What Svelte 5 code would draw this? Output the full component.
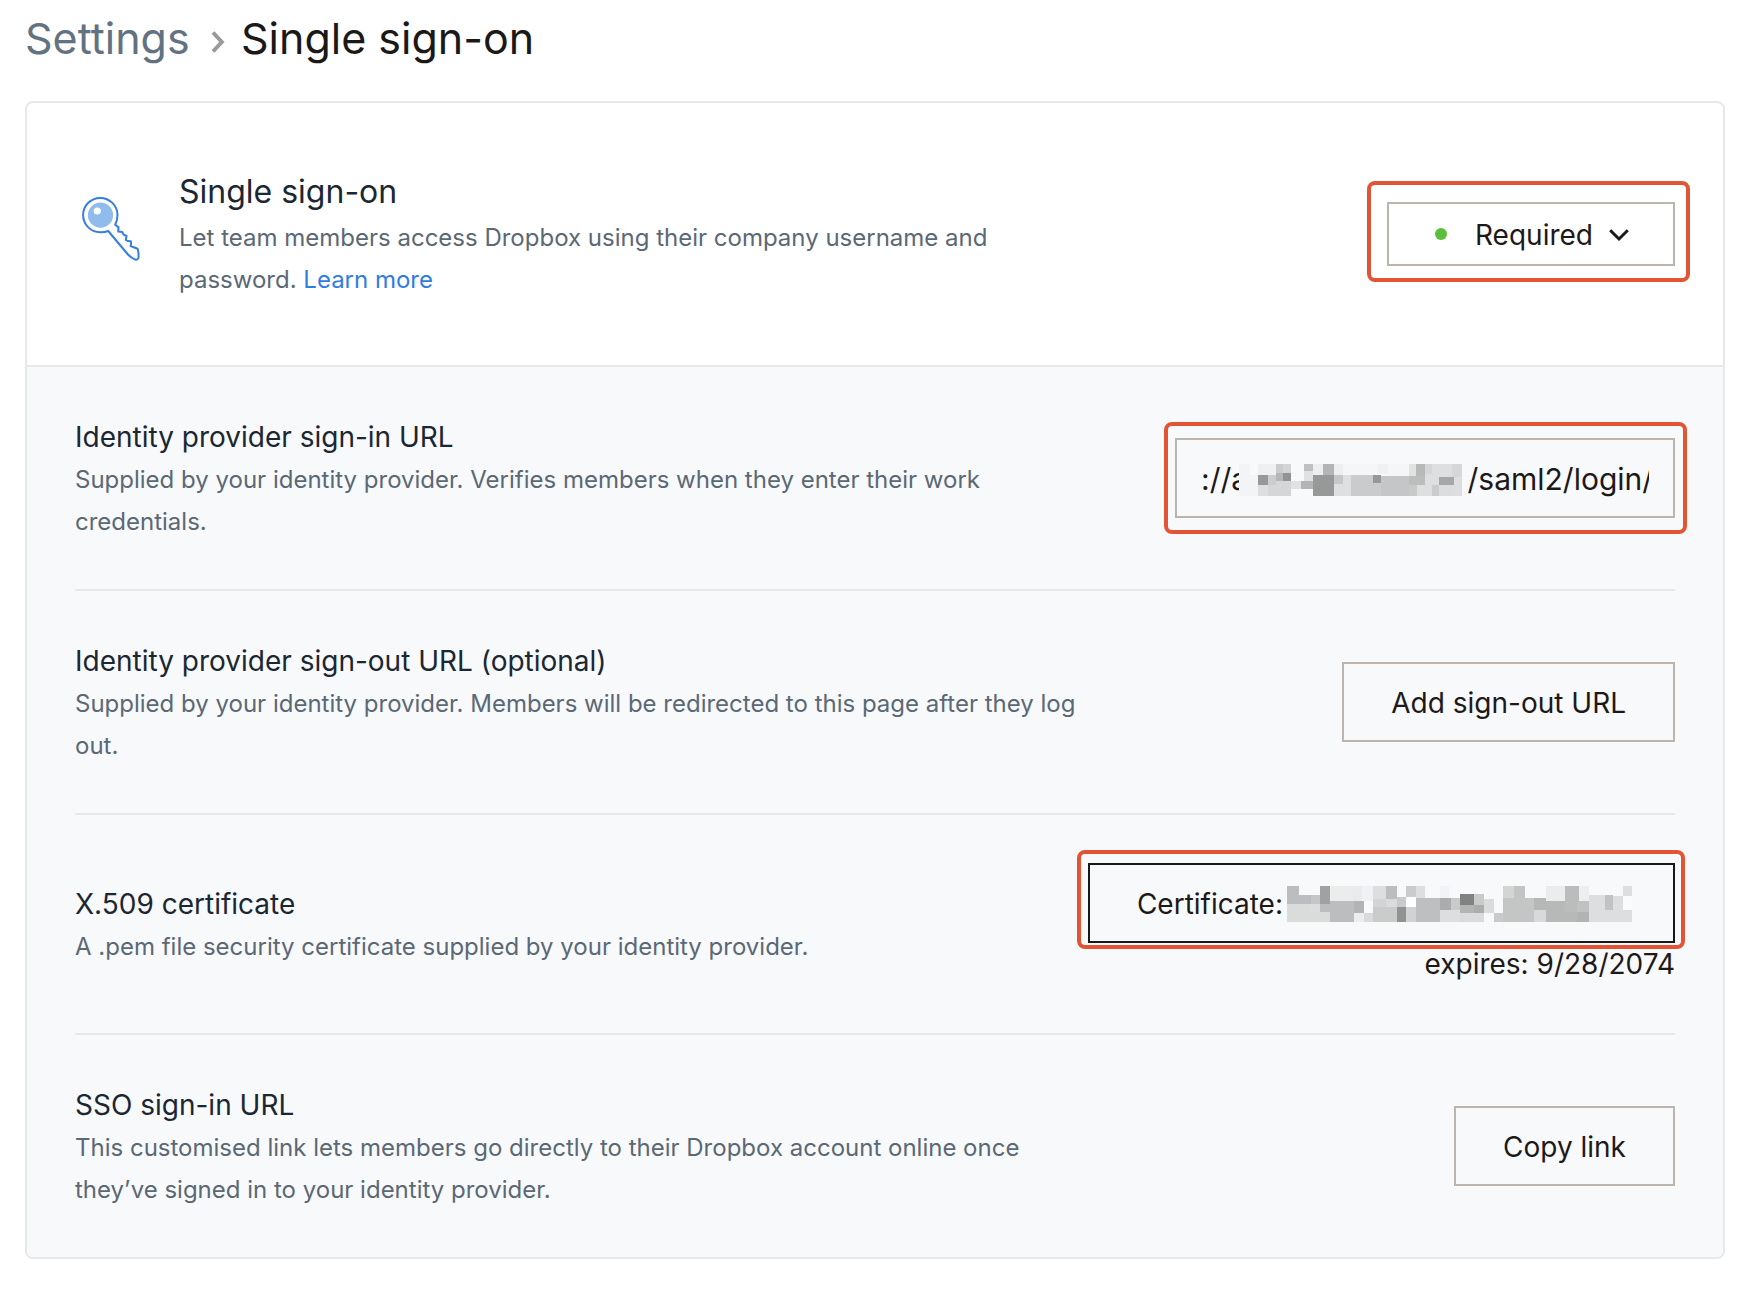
<script>
  const signInUrl = '://a' + '\u00a0'.repeat(26) + '/saml2/login/';
  let status = $state('Required');

  // Redaction tiles: [x, y, width, height, colour], three units per pixel
  const urlTiles = [
    [12, 12, 33, 96, '#f3f4f6'], [45, 12, 24, 33, '#f8f9fb'], [45, 45, 24, 63, '#f3f4f6'],
    [69, 12, 54, 33, '#eff0f2'], [123, 12, 21, 27, '#c9cbcd'], [144, 12, 24, 27, '#d3d4d6'],
    [69, 45, 30, 30, '#979998'], [99, 45, 24, 30, '#cbcdcf'], [123, 39, 21, 24, '#b5b7b8'], [144, 39, 24, 24, '#929493'],
    [123, 63, 45, 45, '#d5d6d8'], [69, 75, 30, 33, '#dddee0'], [99, 75, 24, 33, '#d5d6d8'],
    [168, 63, 30, 24, '#e1e2e4'], [198, 63, 36, 24, '#b3b5b5'],
    [207, 12, 27, 21, '#bfc1c1'], [207, 33, 27, 30, '#e0e1e3'],
    [234, 12, 30, 33, '#edeef0'], [264, 12, 33, 33, '#b3b5b4'], [234, 45, 63, 63, '#979998'],
    [297, 12, 27, 33, '#edeef0'], [324, 12, 102, 33, '#f5f6f8'], [426, 12, 33, 30, '#f0f1f3'], [459, 12, 63, 36, '#f5f6f8'],
    [297, 45, 27, 27, '#c5c7c9'], [324, 45, 24, 27, '#dedfe1'], [297, 72, 51, 36, '#dedfe1'],
    [348, 45, 90, 63, '#cacbcd'], [414, 45, 24, 24, '#979998'], [438, 48, 84, 60, '#c5c6c8'],
    [522, 12, 21, 36, '#e1e2e4'], [543, 12, 27, 36, '#b7b9b8'], [570, 12, 21, 30, '#d5d6d8'], [591, 12, 60, 39, '#dedfe1'],
    [651, 12, 30, 39, '#d6d8d8'], [522, 48, 48, 27, '#bcbebe'], [522, 75, 24, 33, '#c8cac9'],
    [546, 75, 45, 33, '#dedfe1'], [570, 42, 42, 33, '#dedfe1'], [612, 51, 45, 24, '#a6a8a7'],
    [591, 75, 21, 33, '#cbcdcc'], [612, 75, 45, 33, '#dcdddf'], [657, 51, 24, 57, '#dddedf']
  ];

  const certTiles = [
    [9, 12, 36, 54, '#bcbdbf'], [45, 39, 36, 27, '#bcbdbf'], [81, 39, 27, 27, '#c5c6c8'], [108, 12, 30, 54, '#a1a1a1'],
    [9, 66, 72, 54, '#dadcdb'], [81, 66, 27, 24, '#dbdddf'], [81, 90, 57, 30, '#dadcdb'], [108, 66, 30, 24, '#bcbdbf'],
    [138, 12, 69, 45, '#ebedec'], [207, 12, 27, 45, '#eaebed'], [234, 12, 33, 45, '#f0f1f4'],
    [138, 57, 72, 63, '#bcbdbf'], [210, 57, 30, 36, '#b3b4b6'], [210, 93, 30, 27, '#ecedef'], [240, 93, 27, 27, '#d9dadc'],
    [267, 12, 39, 39, '#dddee0'], [306, 12, 33, 39, '#bcbebd'], [267, 51, 39, 24, '#d2d4d5'], [306, 51, 33, 24, '#dadbdf'],
    [267, 75, 72, 45, '#cacccb'], [339, 45, 27, 30, '#c9cacc'], [339, 75, 27, 45, '#919392'],
    [366, 12, 30, 33, '#c9cbcd'], [396, 12, 27, 36, '#dddfde'], [366, 45, 30, 30, '#ffffff'], [366, 75, 30, 45, '#d1d3d2'],
    [396, 48, 72, 72, '#bebfc1'], [468, 12, 27, 36, '#f2f3f6'], [468, 48, 33, 36, '#abadac'], [501, 48, 27, 36, '#c9cacc'],
    [468, 84, 60, 36, '#dddee0'], [528, 36, 42, 33, '#828282'], [570, 36, 30, 33, '#c9cacc'],
    [528, 69, 42, 24, '#b3b5b4'], [570, 69, 30, 24, '#abadac'], [528, 93, 72, 27, '#dadcdb'], [600, 51, 30, 42, '#dadcdb'],
    [630, 93, 27, 27, '#c9cacc'], [657, 12, 33, 36, '#d3d5d4'], [690, 12, 33, 36, '#c3c5c4'],
    [657, 48, 93, 72, '#c4c6c5'], [750, 48, 36, 36, '#b6b8b7'], [750, 84, 36, 36, '#d8d9db'],
    [786, 12, 57, 45, '#ebecee'], [843, 12, 42, 45, '#bbbdbc'], [885, 12, 30, 45, '#edeef0'],
    [786, 57, 57, 63, '#b7b9b8'], [843, 57, 36, 33, '#bbbdbc'], [879, 57, 36, 33, '#c0c2c1'],
    [843, 90, 36, 30, '#b7b9b8'], [879, 90, 36, 30, '#b2b4b3'],
    [915, 39, 48, 81, '#dddee0'], [963, 39, 24, 45, '#c1c3c2'], [963, 84, 24, 36, '#dddee0'], [987, 42, 30, 42, '#dddee0'],
    [987, 84, 30, 36, '#dddedf'], [1017, 12, 27, 30, '#dddee0'], [1017, 42, 27, 42, '#fafbfd'], [1017, 84, 27, 36, '#dddfdf']
  ];
</script>

{#snippet mosaic(tiles, width, height, x, y, name)}
  <svg class={name} viewBox="{x} {y} {width * 3} {height * 3}" {width} {height} shape-rendering="crispEdges" aria-hidden="true">
    {#each tiles as [tx, ty, w, h, fill]}
      <rect x={tx} y={ty} width={w} height={h} {fill} />
    {/each}
  </svg>
{/snippet}

<main>
  <nav class="crumbs" aria-label="Breadcrumb">
    <a href="#settings">Settings</a>
    <svg width="14" height="22" viewBox="0 0 14 22" aria-hidden="true">
      <path d="M2 1.5 10.8 11 2 20.5" fill="none" stroke="#9b9a99" stroke-width="4" />
    </svg>
    <h1>Single sign-on</h1>
  </nav>

  <section class="card">
    <header>
      <svg class="key" width="75" height="80" viewBox="0 4 75 80" aria-hidden="true">
        <path
          d="M33.2 41 C31 42 28 42.3 25.5 42.3 A17.2 17.2 0 1 1 42.5 25 C42.5 28.5 41.6 32 40.2 34.8 L43.6 37.4 L43.2 41.6 L47.2 42 L48.6 44.6 L51.5 46 L50.8 50 L52.6 51 L55.8 51.2 L56.2 53.6 L55.6 56 L62.6 58.8 Q64 63.5 63.4 68 Q62.6 70.2 60.3 69.6 Q56 67.6 53.4 65 Z"
          fill="#fff" stroke="#357de1" stroke-width="2" stroke-linejoin="round" />
        <circle cx="25.5" cy="25.2" r="12.6" fill="#8fbcec" />
        <circle cx="22.3" cy="21" r="3.6" fill="#fff" />
      </svg>
      <div class="copy">
        <h2>Single sign-on</h2>
        <p>Let team members access Dropbox using their company username and password. <a href="#learn">Learn more</a></p>
      </div>
      <div class="control marked mark-status">
        <select aria-label="Single sign-on status" bind:value={status}>
          <option>Required</option>
          <option>Optional</option>
          <option>Off</option>
        </select>
        <span class="dot"></span>
        <svg class="chevron" width="20" height="14" viewBox="0 0 20 14" aria-hidden="true">
          <path d="M1.2 2.2 10 11 18.8 2.2" fill="none" stroke="#1e1919" stroke-width="3" />
        </svg>
      </div>
    </header>

    <div class="rows">
      <div class="row">
        <div class="copy">
          <h3><label for="idp-url">Identity provider sign-in URL</label></h3>
          <p>Supplied by your identity provider. Verifies members when they enter their work credentials.</p>
        </div>
        <div class="control marked mark-url">
          <input id="idp-url" type="text" value={signInUrl} />
          {@render mosaic(urlTiles, 223, 32, 12, 12, 'url-mosaic')}
        </div>
      </div>

      <div class="row">
        <div class="copy">
          <h3>Identity provider sign-out URL (optional)</h3>
          <p>Supplied by your identity provider. Members will be redirected to this page after they log out.</p>
        </div>
        <div class="control"><button type="button">Add sign-out URL</button></div>
      </div>

      <div class="row">
        <div class="copy">
          <h3>X.509 certificate</h3>
          <p>A .pem file security certificate supplied by your identity provider.</p>
        </div>
        <div class="control">
          <div class="marked mark-cert">
            <button type="button" class="cert">
              Certificate:{@render mosaic(certTiles, 345, 36, 9, 12, 'cert-mosaic')}
            </button>
          </div>
          <div class="expires">expires: 9/28/2074</div>
        </div>
      </div>

      <div class="row">
        <div class="copy">
          <h3>SSO sign-in URL</h3>
          <p>This customised link lets members go directly to their Dropbox account online once they’ve signed in to your identity provider.</p>
        </div>
        <div class="control"><button type="button">Copy link</button></div>
      </div>
    </div>
  </section>
</main>

<style>
  :global(body) {
    margin: 0;
    background: #fff;
  }

  main {
    padding: 12px 35px 40px 25px;
    font-family: Inter, 'Liberation Sans', sans-serif;
    font-size: 28px;
    line-height: 42px;
    color: #1e1919;
  }

  h1, h2, h3, p {
    margin: 0;
    font-weight: 400;
  }

  a {
    text-decoration: none;
  }

  .crumbs {
    display: flex;
    align-items: center;
    gap: 16px;
    height: 51px;
    margin-bottom: 38px;
    font-size: 43px;
  }

  .crumbs a {
    min-width: 170px;
    color: #637282;
  }

  .crumbs svg {
    margin-top: 8px;
  }

  h1 {
    font-size: 43px;
    color: #1b1918;
  }

  .card {
    border: 2px solid #e6e8eb;
    border-radius: 8px;
    overflow: hidden;
  }

  header {
    display: flex;
    align-items: center;
    padding: 64px 48px;
    border-bottom: 2px solid #e6e8eb;
  }

  .key {
    flex: none;
    margin-right: 29px;
  }

  .copy {
    max-width: 1020px;
    margin-bottom: -2px;
  }

  header .copy {
    max-width: 860px;
    margin-bottom: 0;
  }

  h2 {
    font-size: 32px;
    line-height: 50px;
    color: #1b2733;
  }

  h3 {
    font-size: 28px;
    line-height: 44px;
    color: #1b2733;
  }

  p {
    font-size: 24px;
    line-height: 42px;
    color: #5b6876;
  }

  p a {
    color: #2f7de1;
  }

  .rows {
    padding: 0 48px;
    background: #f8f9fb;
  }

  .row {
    display: flex;
    align-items: center;
    padding: 48px 0;
  }

  .row + .row {
    border-top: 2px solid #e6e8eb;
  }

  .control {
    position: relative;
    flex: none;
    margin-left: auto;
  }

  button, input, select {
    box-sizing: border-box;
    display: block;
    height: 80px;
    margin: 0;
    border: 2px solid #bbb5ae;
    border-radius: 0;
    background: transparent;
    color: #1e1919;
    font: inherit;
  }

  button {
    padding: 2px 47px 0;
  }

  input {
    width: 500px;
    padding: 2px 24px 0;
    font-size: 30px;
  }

  select {
    width: 288px;
    height: 64px;
    padding: 2px 46px 0 86px;
    appearance: none;
  }

  .dot {
    position: absolute;
    top: 26px;
    left: 48px;
    width: 12px;
    height: 12px;
    border-radius: 50%;
    background: #5bbf3a;
    pointer-events: none;
  }

  .chevron {
    position: absolute;
    top: 26px;
    right: 46px;
    pointer-events: none;
  }

  .control :global(.url-mosaic) {
    position: absolute;
    top: 26px;
    left: 64px;
    pointer-events: none;
  }

  .cert {
    display: flex;
    align-items: center;
    gap: 4px;
    padding-right: 41px;
    border-color: #1a1817;
  }

  .expires {
    text-align: right;
  }

  /* Red call-out frames drawn over the controls */
  .marked {
    position: relative;
  }

  .marked::after {
    content: '';
    position: absolute;
    border: 4px solid #e25434;
    border-radius: 8px;
    pointer-events: none;
  }

  .mark-status::after {
    inset: -21px -15px -16px -20px;
  }

  .mark-url::after {
    inset: -16px -12px -16px -11px;
  }

  .mark-cert::after {
    inset: -13px -10px -6px -11px;
  }
</style>
